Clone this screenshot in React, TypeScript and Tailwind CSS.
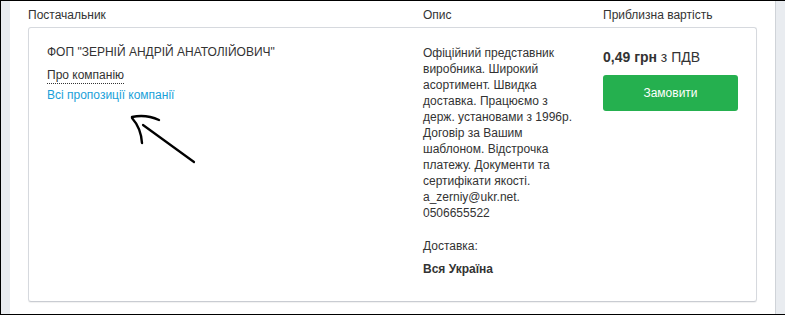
import React from "react";

const FONT = { fontFamily: '"Liberation Sans", Arial, sans-serif' };

const Arrow = () => (
  <svg
    className="absolute left-[120px] top-[105px]"
    width="80"
    height="60"
    viewBox="0 0 80 60"
    fill="none"
  >
    <path d="M22 19 L73 56" stroke="#000" strokeWidth="2.2" strokeLinecap="round" />
    <path d="M11 11 Q25 8 38 14" stroke="#000" strokeWidth="2.4" strokeLinecap="round" />
    <path d="M11 12 Q20 22 21 37" stroke="#000" strokeWidth="2.4" strokeLinecap="round" />
  </svg>
);

export default function App() {
  return (
    <div
      className="relative flex w-[785px] h-[315px] border-t border-b border-l border-black bg-white text-[12px] text-[#333]"
      style={FONT}
    >
      <div className="w-[9px] shrink-0 bg-[#e9ecf0]" />

      <div className="w-[765px] shrink-0 px-[18px]">
        {/* Column headers */}
        <div className="grid grid-cols-[395px_180px_1fr] h-[26px] pt-[6px] leading-[16px]">
          <div>Постачальник</div>
          <div>Опис</div>
          <div>Приблизна вартість</div>
        </div>

        {/* Offer card */}
        <div className="grid grid-cols-[376px_180px_135px] h-[275px] pl-[18px] pt-[16px] border border-[#d6d9de] border-b-[#c9ccd2] rounded-[3px] shadow-[0_1px_1px_rgba(0,0,0,0.06)]">
          <div className="leading-[16px]">
            <div>ФОП "ЗЕРНІЙ АНДРІЙ АНАТОЛІЙОВИЧ"</div>
            <div className="mt-[7px]">
              <span className="border-b border-dotted border-[#333] pb-[1px]">Про компанію</span>
            </div>
            <div className="mt-[4px] text-[#1a9fd9]">Всі пропозиції компанії</div>
          </div>

          <div className="w-[156px] leading-[16px] pt-[1px]">
            <p>
              Офіційний представник виробника. Широкий асортимент. Швидка доставка. Працюємо з держ.
              установами з 1996р. Договір за Вашим шаблоном. Відстрочка платежу. Документи та
              сертифікати якості. a_zerniy@ukr.net. 0506655522
            </p>
            <p className="mt-[17px]">Доставка:</p>
            <p className="mt-[7px] font-bold">Вся Україна</p>
          </div>

          <div>
            <div className="text-[14px] leading-[18px] pt-[4px]">
              <span className="font-bold">0,49 грн</span> з ПДВ
            </div>
            <button className="mt-[9px] w-[135px] h-[36px] rounded-[3px] bg-[#25b04f] text-white text-[12px]">
              Замовити
            </button>
          </div>
        </div>
      </div>

      <div className="w-px shrink-0 bg-[#cfd3d8]" />
      <div className="flex-1 bg-[#e9ecf0]" />

      <Arrow />
    </div>
  );
}
